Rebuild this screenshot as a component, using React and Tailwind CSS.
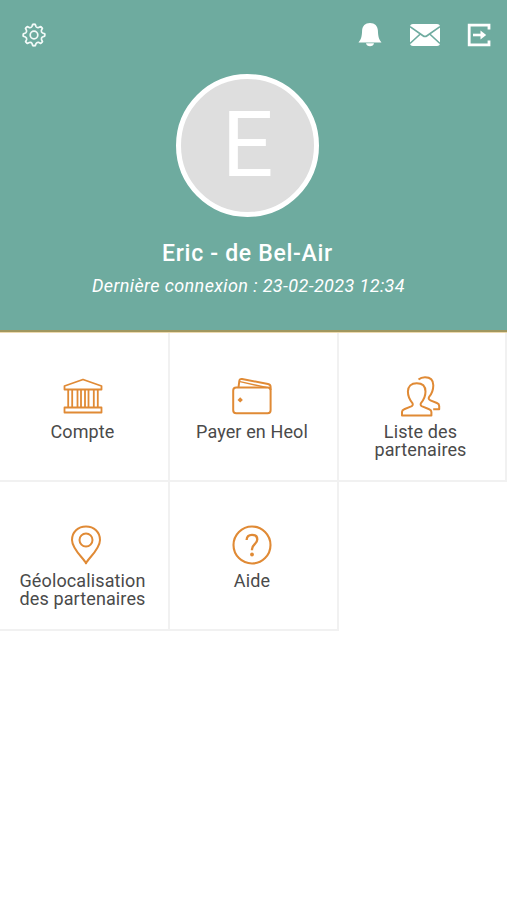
const GearIcon = () => (
  <svg width="26" height="26" viewBox="-13 -13 26 26" fill="none" stroke="#f2faf8" strokeWidth="1.7" strokeLinejoin="round" strokeLinecap="round">
    {[0, 45, 90, 135, 180, 225, 270, 315].map((angle) => (
      <path key={angle} transform={`rotate(${angle})`} d="M0-10.7 1.3-10.6 2-8.4Q2.9-7 4.67-7.5L6.7-8.5 7.57-7.57" />
    ))}
    <circle r="3.8" />
  </svg>
);

const BellIcon = () => (
  <svg width="24" height="26" viewBox="0 0 24 26" fill="white">
    <path d="M12 1C7.200 1 4.300 4 4.100 8.600 3.900 14.800 3 17.500.5 20.500h23c-2.500-3-3.400-5.700-3.600-11.900C19.700 4 16.800 1 12 1z" />
    <path d="M8 21.200h8c-.3 2-1.900 3-4 3s-3.700-1-4-3z" />
  </svg>
);

const MailIcon = () => (
  <svg width="32" height="24" viewBox="0 0 32 24">
    <rect x="1" y="1" width="30" height="22" rx="3" fill="white" />
    <path d="M1 3.600 14 12.700q2 1.400 4 0L31 3.600M1 20.500 11.300 11M31 20.500 20.700 11" fill="none" stroke="#6eab9f" strokeWidth="1.700" />
  </svg>
);

const LogoutIcon = () => (
  <svg width="24" height="24" viewBox="0 0 24 24" fill="none" stroke="white">
    <path d="M22 6.500V2.200H2.200v19.600H22v-4.300" strokeWidth="2.800" />
    <path d="M6 12h10" strokeWidth="2.600" />
    <path d="M13.500 7.600 19.200 12l-5.700 4.400z" fill="white" stroke="none" />
  </svg>
);

const BankIcon = () => (
  <svg width="40" height="36" viewBox="0 0 40 36" fill="none" stroke="#e08a35" strokeWidth="1.800" strokeLinejoin="round">
    <path d="M20 1.500 1.500 8V11.500h37V8z" />
    <path d="M5.200 11.500v18M9.200 11.500v18M14.500 11.500v18M18 11.500v18M22 11.500v18M25.500 11.500v18M30.800 11.500v18M34.800 11.500v18" />
    <path d="M1.500 29.500h37v5h-37z" />
  </svg>
);

const WalletIcon = () => (
  <svg width="40" height="38" viewBox="0 0 40 38" fill="none" stroke="#e08a35" strokeWidth="2" strokeLinejoin="round">
    <rect x="1.200" y="10.500" width="37.400" height="25.700" rx="3" />
    <path d="M6.500 10.500 7.300 4c.2-1.600 1.200-2.300 2.800-2L36 7c1.700.3 2.600 1.400 2.600 3v3" />
    <path d="M8 4.600 34.500 10.500" strokeWidth="1.400" />
    <path d="M8.200 20.200 10.900 22.900 8.200 25.600 5.500 22.900z" fill="#e08a35" stroke="none" />
  </svg>
);

const PartnersIcon = () => (
  <svg width="42" height="42" viewBox="0 0 42 42" fill="none" stroke="#e08a35" strokeWidth="2" strokeLinejoin="round">
    <path d="M2 39.500v-3.600c0-1.400.8-2.200 2.200-2.700l7-2.800c1.600-.7 2-1.900 1.200-3.300C9.300 23.500 7.900 20 7.900 15.600 7.900 10.200 11.300 7.200 16.700 7.200s8.800 3 8.800 8.400c0 4.400-1.400 7.900-4.500 11.500-.8 1.400-.4 2.600 1.200 3.300l7 2.800c1.400.5 2.200 1.300 2.200 2.700v3.600z" />
    <path d="M18.500 3.600C20.300 1.900 22.400 1.200 25 1.200c5 0 8.300 2.800 8.300 8 0 4.700-1.300 8.300-4.200 11.700-.9 1.500-.3 2.700 1.300 3.400l6.500 2.700c1.500.6 2.300 1.500 2.300 2.900v3.300h-6" />
  </svg>
);

const PinIcon = () => (
  <svg width="32" height="40" viewBox="0 0 32 40" fill="none" stroke="#e08a35" strokeWidth="2" strokeLinejoin="round">
    <path d="M16 38.300C14.500 34 2 24.500 2 15 2 7 8 1.500 16 1.500S30 7 30 15c0 9.500-12.500 19-14 23.300z" />
    <circle cx="16" cy="15" r="6.500" />
  </svg>
);

const HelpIcon = () => (
  <svg width="40" height="40" viewBox="0 0 40 40" fill="none" stroke="#e08a35" strokeWidth="2.100">
    <circle cx="20" cy="20" r="18.500" />
    <path d="M14.600 15c.2-3.200 2.300-5.200 5.400-5.200s5.300 1.800 5.300 4.800c0 4.400-5.300 4.800-5.300 9.600v1" strokeWidth="2.300" />
    <circle cx="20" cy="29.500" r="1.900" fill="#e08a35" stroke="none" />
  </svg>
);

const Tile = ({ icon, children }) => (
  <div className="flex h-[149px] flex-col items-center border-r-2 border-b-2 border-[#f1f1f1] pt-[43px] pr-[3px]">
    <div className="flex h-[47px] items-start justify-center">{icon}</div>
    <p className="text-center text-[18px] leading-[18px] tracking-[0.12px] text-[#4a4a4a]">{children}</p>
  </div>
);

const App = () => {
  return (
    <div className="h-[900px] w-[507px] overflow-hidden bg-white font-['Roboto',sans-serif]">
      <header className="h-[332px] border-b-2 border-[#a0975f] bg-[#6eab9f] text-white">
        <div className="flex h-[74px] items-start pt-[22px] pr-[16px] pl-[20.5px]">
          <GearIcon />
          <div className="ml-auto flex items-start">
            <div className="mr-[27px]">
              <BellIcon />
            </div>
            <div className="mr-[26px] pt-px">
              <MailIcon />
            </div>
            <div className="pt-[0.5px]">
              <LogoutIcon />
            </div>
          </div>
        </div>
        <div className="flex flex-col items-center">
          <div className="ml-[-13px] flex h-[143px] w-[143px] items-center justify-center rounded-full border-[5px] border-white bg-[#dedede]">
            <span className="pl-[1px] text-[91px] leading-none">E</span>
          </div>
          <h1 className="mt-[23px] ml-[-12px] text-[23px] leading-[28px] font-medium tracking-[0.7px]">
            Eric - de Bel-Air
          </h1>
          <p className="mt-[5px] ml-[-10px] text-[18px] leading-[26px] tracking-[0.39px] italic">
            Dernière connexion : 23-02-2023 12:34
          </p>
        </div>
      </header>

      <div className="grid grid-cols-[170px_169px_168px] border-t border-[#ecd9ae]">
        <Tile icon={<div className="pt-[2px]"><BankIcon /></div>}>Compte</Tile>
        <Tile icon={<div className="pt-px"><WalletIcon /></div>}>Payer en Heol</Tile>
        <Tile icon={<PartnersIcon />}>
          Liste des
          <br />
          partenaires
        </Tile>
        <Tile icon={<div className="pl-[6px]"><PinIcon /></div>}>
          Géolocalisation
          <br />
          des partenaires
        </Tile>
        <Tile icon={<HelpIcon />}>Aide</Tile>
      </div>
    </div>
  );
};

export default App;
